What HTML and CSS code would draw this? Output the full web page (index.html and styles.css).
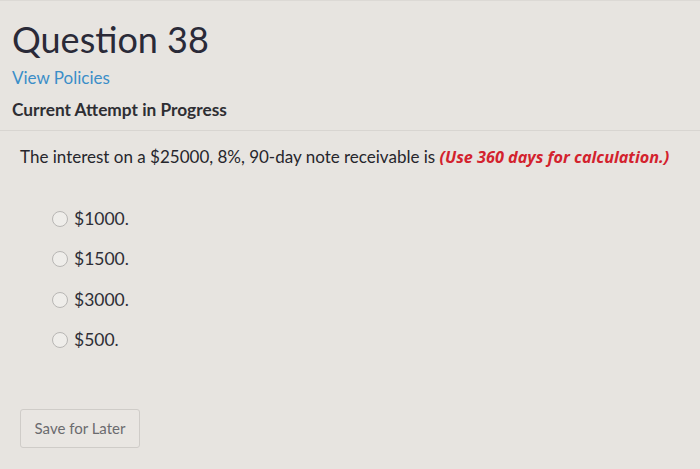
FILE: index.html
```html
<!DOCTYPE html>
<html>
<head>
<meta charset="utf-8">
<link rel="stylesheet" href="styles.css">
</head>
<body>
<div class="page">
  <header class="head">
    <h1 class="title">Question 38</h1>
    <a class="policies">View Policies</a>
    <div class="attempt">Current Attempt in Progress</div>
  </header>
  <section class="question">
    <p class="prompt">The interest on a $25000, 8%, 90-day note receivable is <span class="note">(Use 360 days for calculation.)</span></p>
    <ul class="options">
      <li class="option"><span class="radio"></span><span>$1000.</span></li>
      <li class="option"><span class="radio"></span><span>$1500.</span></li>
      <li class="option"><span class="radio"></span><span>$3000.</span></li>
      <li class="option"><span class="radio"></span><span>$500.</span></li>
    </ul>
    <button class="save">Save for Later</button>
  </section>
</div>
</body>
</html>
```
FILE: styles.css
```css
html, body {
  margin: 0;
  padding: 0;
}
body {
  background: #e7e4e0;
  font-family: Lato, "Open Sans", sans-serif;
  color: #2b2b33;
  width: 700px;
  height: 469px;
  overflow: hidden;
}
.page {
  display: flex;
  flex-direction: column;
}
.head {
  padding: 14px 12px 0 12px;
  border-top: 1px solid #dcd9d5;
  border-bottom: 1px solid #d8d5d1;
  padding-bottom: 10px;
  display: flex;
  flex-direction: column;
}
.title {
  margin: 0;
  font-weight: 400;
  font-size: 36px;
  line-height: 48px;
  color: #2a2a38;
}
.policies {
  margin-top: 5px;
  font-size: 17px;
  line-height: 20px;
  color: #3b8ec8;
}
.attempt {
  margin-top: 12px;
  font-size: 17.3px;
  line-height: 20px;
  font-weight: 700;
  color: #2e2e33;
}
.question {
  padding: 0 20px;
  display: flex;
  flex-direction: column;
  align-items: flex-start;
}
.prompt {
  margin: 15px 0 0 0;
  font-size: 17px;
  line-height: 22px;
  color: #26262c;
  white-space: nowrap;
}
.note {
  font-family: "Open Sans", sans-serif;
  color: #d3222d;
  font-weight: 700;
  font-style: italic;
  font-size: 16.2px;
}
.options {
  list-style: none;
  margin: 41px 0 0 0;
  padding: 0 0 0 32px;
  display: flex;
  flex-direction: column;
  gap: 20.3px;
}
.option {
  display: flex;
  align-items: center;
  gap: 6px;
  font-size: 17.5px;
  line-height: 20px;
  color: #2e2e36;
}
.radio {
  width: 14px;
  height: 14px;
  border-radius: 50%;
  border: 1px solid #b8b6b4;
  background: #efedea;
}
.save {
  margin-top: 59px;
  width: 120px;
  height: 39px;
  border: 1px solid #cfccc8;
  border-radius: 3px;
  background: #e9e6e2;
  font-family: Lato, sans-serif;
  font-size: 15px;
  color: #6b6b6e;
}
```
